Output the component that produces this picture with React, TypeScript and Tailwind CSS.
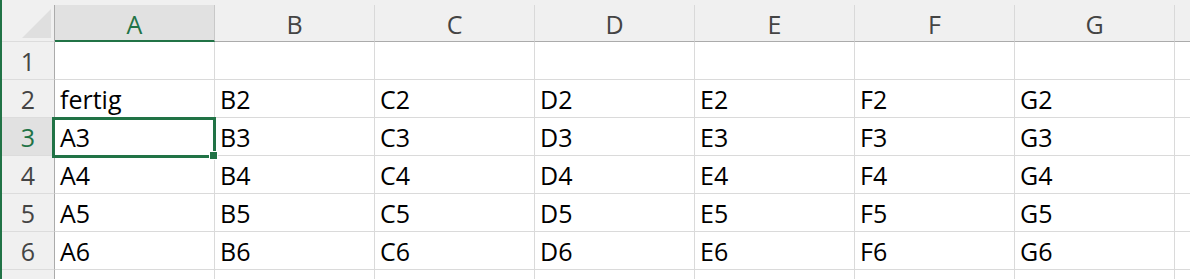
const cols = ["A", "B", "C", "D", "E", "F", "G"];

const rows: { n: number; label: string; cells: string[] }[] = [
  { n: 1, label: "1", cells: ["", "", "", "", "", "", ""] },
  { n: 2, label: "2", cells: ["fertig", "B2", "C2", "D2", "E2", "F2", "G2"] },
  { n: 3, label: "3", cells: ["A3", "B3", "C3", "D3", "E3", "F3", "G3"] },
  { n: 4, label: "4", cells: ["A4", "B4", "C4", "D4", "E4", "F4", "G4"] },
  { n: 5, label: "5", cells: ["A5", "B5", "C5", "D5", "E5", "F5", "G5"] },
  { n: 6, label: "6", cells: ["A6", "B6", "C6", "D6", "E6", "F6", "G6"] },
  // row 7 is only a sliver at the bottom, label not visible
  { n: 7, label: "", cells: ["", "", "", "", "", "", ""] },
];

function CornerTriangle() {
  return (
    <svg width="52" height="36" viewBox="0 0 52 36" className="block">
      <polygon points="20,33 49,33 49,4" fill="#dfdfdf" />
    </svg>
  );
}

export default function App() {
  return (
    <div
      className="relative w-[1190px] h-[279px] overflow-hidden bg-white border-l-2 border-[#217346] text-[25px] text-black"
      style={{ fontFamily: '"Open Sans", "Noto Sans", sans-serif' }}
    >
      {/* column headers */}
      <div className="flex h-[42px] bg-[#f0f0f0]">
        <div className="w-[53px] shrink-0 mt-[5px] h-[37px] border-r border-b border-r-[#ababab] border-b-[#dcdcdc]">
          <CornerTriangle />
        </div>
        {cols.map((c) => (
          <div
            key={c}
            className={
              c === "A"
                ? "w-[160px] shrink-0 mt-[5px] h-[37px] bg-[#e1e1e1] border-r border-r-[#c8c8c8] border-b-2 border-b-[#217346] text-center text-[#217346] leading-[30px] pt-[4px]"
                : "w-[160px] shrink-0 mt-[5px] h-[37px] border-r border-r-[#d9d9d9] border-b border-b-[#ababab] text-center text-[#444444] leading-[30px] pt-[4px]"
            }
          >
            {c}
          </div>
        ))}
        <div className="flex-1 mt-[5px] h-[37px] border-b border-b-[#ababab]" />
      </div>

      {/* body rows */}
      {rows.map((r) => (
        <div key={r.n} className="flex h-[38px]">
          <div
            className={
              r.n === 3
                ? "w-[53px] shrink-0 bg-[#e1e1e1] border-r border-r-[#ababab] border-b border-b-[#dcdcdc] text-center text-[#217346] leading-[38px]"
                : "w-[53px] shrink-0 bg-[#f0f0f0] border-r border-r-[#ababab] border-b border-b-[#dcdcdc] text-center text-[#444444] leading-[38px]"
            }
          >
            {r.label}
          </div>
          {r.cells.map((v, i) => (
            <div
              key={i}
              className="w-[160px] shrink-0 border-r border-b border-[#dadada] pl-[5px] leading-[38px] whitespace-nowrap"
            >
              {v}
            </div>
          ))}
          <div className="flex-1 border-b border-[#dadada]" />
        </div>
      ))}

      {/* selection around A3 */}
      <div className="absolute left-[50px] top-[117px] w-[164px] h-[41px] border-[3px] border-[#217346] pointer-events-none" />
      <div className="absolute left-[207px] top-[151px] w-[9px] h-[9px] bg-[#217346] border border-white" />
    </div>
  );
}
